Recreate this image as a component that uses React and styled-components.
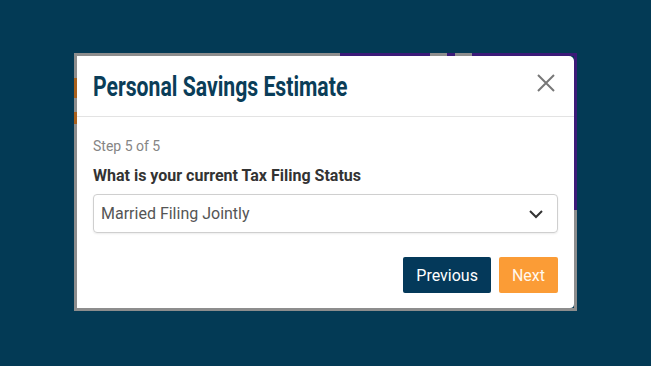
import React from 'react'
import styled, { createGlobalStyle } from 'styled-components'

const Global = createGlobalStyle`
html, body {
  margin: 0;
  padding: 0;
  background: #033a55;
}
* { box-sizing: border-box; }
`;

export default function App() {
  return (
    <Page>
      <Global />
      <Frame>
        <PurpleTop />
        <PurpleRight />
        <GrayTick style={{ left: 353 }} />
        <GrayTick style={{ left: 378 }} />
        <OrangeTick style={{ top: 22, height: 20 }} />
        <OrangeTick style={{ top: 56, height: 12 }} />
        <Modal>
          <Header>
            <Title>Personal Savings Estimate</Title>
            <Close aria-label="close">
              <svg width="20" height="20" viewBox="0 0 20 20">
                <path d="M2 2 L18 18 M18 2 L2 18" stroke="#777" strokeWidth="2" strokeLinecap="butt" />
              </svg>
            </Close>
          </Header>
          <Body>
            <Step>Step 5 of 5</Step>
            <Label>What is your current Tax Filing Status</Label>
            <Select>
              <span>Married Filing Jointly</span>
              <svg width="16" height="10" viewBox="0 0 16 10">
                <path d="M2 2 L8 8 L14 2" fill="none" stroke="#333" strokeWidth="2" />
              </svg>
            </Select>
            <Actions>
              <Btn $variant="dark">Previous</Btn>
              <Btn $variant="orange">Next</Btn>
            </Actions>
          </Body>
        </Modal>
      </Frame>
    </Page>
  )
}

const Page = styled.div`
width: 651px;
height: 366px;
display: flex;
justify-content: center;
padding-top: 53px;
font-family: Roboto, "Liberation Sans", sans-serif;
`;

const Frame = styled.div`
position: relative;
width: 503px;
height: 258px;
border: 3px solid #8d8d8d;
align-self: flex-start;
`;

const PurpleTop = styled.div`
position: absolute;
top: -3px;
left: 263px;
right: -3px;
height: 3px;
background: #3b1a78;
`;

const PurpleRight = styled.div`
position: absolute;
top: -3px;
right: -3px;
width: 3px;
height: 157px;
background: #3b1a78;
`;

const GrayTick = styled.div`
position: absolute;
top: -3px;
width: 17px;
height: 3px;
background: #8d8d8d;
`;

const OrangeTick = styled.div`
position: absolute;
left: -3px;
width: 3px;
background: #a8601c;
`;

const Modal = styled.div`
position: relative;
width: 497px;
height: 252px;
background: #fff;
border-radius: 0 5px 4px 0;
`;

const Header = styled.div`
display: flex;
align-items: center;
justify-content: space-between;
height: 61px;
padding: 0 18px 0 16px;
border-bottom: 1px solid #e3e3e3;
`;

const Title = styled.h1`
margin: 0;
font-family: Roboto, "Liberation Sans", sans-serif;
font-weight: 700;
font-size: 28px;
line-height: 32px;
color: #0a3d58;
transform: scaleX(0.757);
transform-origin: left center;
white-space: nowrap;
padding-top: 1px;
`;

const Close = styled.div`
display: flex;
align-items: center;
margin-top: -6px;
`;

const Body = styled.div`
padding: 21px 16px 0 16px;
`;

const Step = styled.div`
font-size: 14px;
color: #858585;
line-height: 16px;
`;

const Label = styled.div`
margin-top: 12px;
font-size: 16px;
font-weight: 700;
color: #333;
line-height: 19px;
`;

const Select = styled.div`
margin-top: 9px;
height: 39px;
display: flex;
align-items: center;
justify-content: space-between;
padding: 0 13px 0 7px;
border: 1px solid #cfcfcf;
border-radius: 4px;
box-shadow: 0 1px 2px rgba(0,0,0,0.08);
font-size: 16px;
color: #555;
`;

const Actions = styled.div`
display: flex;
justify-content: flex-end;
gap: 8px;
margin-top: 24px;
`;

const Btn = styled.div`
height: 36px;
display: flex;
align-items: center;
justify-content: center;
padding: 0 13px;
border-radius: 2px;
font-size: 16px;
color: ${p => p.$variant === 'dark' ? '#fff' : '#fff8ee'};
background: ${p => p.$variant === 'dark' ? '#04395a' : '#fb9c36'};
`;
